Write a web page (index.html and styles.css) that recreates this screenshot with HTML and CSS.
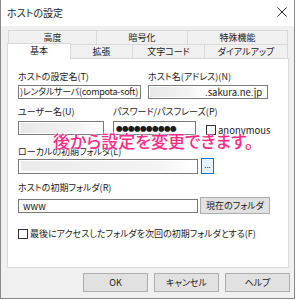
FILE: index.html
```html
<!DOCTYPE html>
<html lang="ja">
<head>
    <meta charset="UTF-8">
    <title>ホストの設定</title>
    <link rel="stylesheet" href="styles.css">
</head>
<body>
    <div class="window">
        <div class="titlebar">
            <span class="title">ホストの設定</span>
            <svg class="close" width="10" height="10" viewBox="0 0 10 10">
                <path d="M0.5 0.5 L9.5 9.5 M9.5 0.5 L0.5 9.5" stroke="#222" stroke-width="1" fill="none"/>
            </svg>
        </div>
        <div class="content">
            <div class="tabrow back-row">
                <div class="tab t1">高度</div>
                <div class="tab t2">暗号化</div>
                <div class="tab t3">特殊機能</div>
            </div>
            <div class="tabrow front-row">
                <div class="tab active">基本</div>
                <div class="tab t5">拡張</div>
                <div class="tab t6">文字コード</div>
                <div class="tab t7">ダイアルアップ</div>
            </div>
            <div class="panel">
                <div class="pair first">
                    <div class="field wide">
                        <div class="label">ホストの設定名(T)</div>
                        <div class="input name">)レンタルサーバ(compota-soft)</div>
                    </div>
                    <div class="field host">
                        <div class="label">ホスト名(アドレス)(N)</div>
                        <div class="input"><span class="blur short"></span>.sakura.ne.jp</div>
                    </div>
                </div>
                <div class="pair second">
                    <div class="field user">
                        <div class="label">ユーザー名(U)</div>
                        <div class="input"><span class="blur long"></span></div>
                    </div>
                    <div class="field pass">
                        <div class="label">パスワード/パスフレーズ(P)</div>
                        <div class="input dots">●●●●●●●●●●</div>
                    </div>
                    <label class="check anon"><span class="box"></span>anonymous</label>
                </div>
                <div class="field local">
                    <div class="label">ローカルの初期フォルダ(L)</div>
                    <div class="row">
                        <div class="input folder"><span class="blur full"></span></div>
                        <div class="browse">...</div>
                    </div>
                </div>
                <div class="field remote">
                    <div class="label">ホストの初期フォルダ(R)</div>
                    <div class="row">
                        <div class="input folder">www</div>
                        <div class="btn current">現在のフォルダ</div>
                    </div>
                </div>
                <label class="check last"><span class="box"></span>最後にアクセスしたフォルダを次回の初期フォルダとする(F)</label>
                <div class="note">後から設定を変更できます。</div>
            </div>
            <div class="buttons">
                <div class="btn">OK</div>
                <div class="btn">キャンセル</div>
                <div class="btn">ヘルプ</div>
            </div>
        </div>
    </div>
</body>
</html>
```

FILE: styles.css
```css
body {
    margin: 0;
    background: #ffffff;
    font-family: "Noto Sans CJK JP", "Noto Sans", sans-serif;
    font-feature-settings: "palt";
    color: #1a1a1a;
}

.window {
    width: 295px;
    height: 299px;
    box-sizing: border-box;
    border: 1px solid #8a8a8a;
    border-top: none;
    background: #f0f0f0;
    overflow: hidden;
}

.titlebar {
    height: 26px;
    background: #ffffff;
    display: flex;
    align-items: center;
    justify-content: space-between;
    padding: 0 7px 2px 6px;
    box-sizing: border-box;
}

.title {
    font-size: 10px;
}

.content {
    padding: 4px 0 0 6px;
}

.tabrow {
    display: flex;
    font-size: 9px;
    line-height: 13px;
}

.tab {
    box-sizing: border-box;
    height: 14px;
    border: 1px solid #d9d9d9;
    border-bottom: none;
    text-align: center;
    background: #f0f0f0;
}

.back-row {
    margin-left: 1px;
}

.t1 { width: 89px; }
.t2 { width: 91px; border-left: none; }
.t3 { width: 100px; border-left: none; }

.front-row {
    height: 14px;
    align-items: flex-end;
}

.tab.active {
    width: 64px;
    height: 16px;
    background: #ffffff;
    position: relative;
    z-index: 2;
    margin-bottom: -1px;
    line-height: 14px;
}

.t5 { width: 62px; border-left: none; }
.t6 { width: 72px; border-left: none; }
.t7 { width: 83px; border-left: none; }

.panel {
    position: relative;
    width: 282px;
    height: 210px;
    box-sizing: border-box;
    background: #ffffff;
    border: 1px solid #d9d9d9;
    padding: 12px 0 0 10px;
    font-size: 9px;
}

.label {
    line-height: 12px;
    height: 12px;
    white-space: nowrap;
}

.input {
    box-sizing: border-box;
    height: 14px;
    border: 1px solid #7a7a7a;
    background: #ffffff;
    line-height: 12px;
    padding: 0 2px;
    white-space: nowrap;
    overflow: hidden;
    display: flex;
    align-items: center;
    font-size: 9.5px;
}

.input.name {
    font-size: 9px;
    letter-spacing: -0.25px;
    padding-left: 1px;
}

.pair {
    display: flex;
}

.pair .label {
    margin-bottom: 2px;
}

.field {
    flex: none;
    min-width: 0;
}

.wide { width: 123px; margin-right: 7px; }
.host { width: 120px; }
.host .input { padding-left: 1px; }

.second {
    margin-top: 7px;
}

.second .label {
    margin-bottom: 3px;
}

.user { width: 86px; margin-right: 9px; }
.pass { width: 83px; margin-right: 10px; }

.dots {
    font-size: 6.5px;
    letter-spacing: -0.5px;
    padding-left: 2px;
}

.blur {
    display: inline-block;
    height: 10px;
    background: linear-gradient(90deg, #e8e8e8, #f3f3f3 70%, #ffffff);
}

.short { width: 54px; margin-right: 1px; }
.long { width: 80px; }
.full { width: 172px; background: linear-gradient(90deg, #ebebeb, #f4f4f4 80%, #ffffff); }

.check {
    display: flex;
    align-items: center;
    white-space: nowrap;
}

.box {
    width: 10px;
    height: 10px;
    box-sizing: border-box;
    border: 1px solid #333333;
    background: #ffffff;
    margin-right: 2px;
}

.anon {
    align-self: flex-end;
    height: 14px;
    margin-bottom: -2px;
    font-size: 9.5px;
}

.local {
    margin-top: 11px;
}

.row {
    display: flex;
    align-items: center;
}

.folder {
    width: 180px;
    height: 15px;
}

.browse {
    box-sizing: border-box;
    width: 13px;
    height: 16px;
    margin-left: 3px;
    border: 1px solid #0078d7;
    background: #e5f1fb;
    font-size: 8px;
    line-height: 11px;
    text-align: center;
}

.remote {
    margin-top: 8px;
}

.remote .label {
    margin-bottom: 3px;
}

.remote .folder {
    height: 14px;
    padding-left: 4px;
}

.btn {
    box-sizing: border-box;
    height: 19px;
    width: 65px;
    border: 1px solid #adadad;
    background: #e1e1e1;
    font-size: 9px;
    display: flex;
    align-items: center;
    justify-content: center;
}

.btn.current {
    width: 70px;
    height: 17px;
    margin-left: 2px;
}

.last {
    margin-top: 13px;
}

.note {
    position: absolute;
    left: 45px;
    top: 72px;
    font-size: 17px;
    line-height: 20px;
    color: #ff2a85;
    font-weight: 500;
    white-space: nowrap;
    text-shadow: 0 0 2px #ffffff, 0 0 2px #ffffff;
    z-index: 3;
}

.buttons {
    display: flex;
    gap: 6px;
    margin: 5px 0 0 76px;
}
```
